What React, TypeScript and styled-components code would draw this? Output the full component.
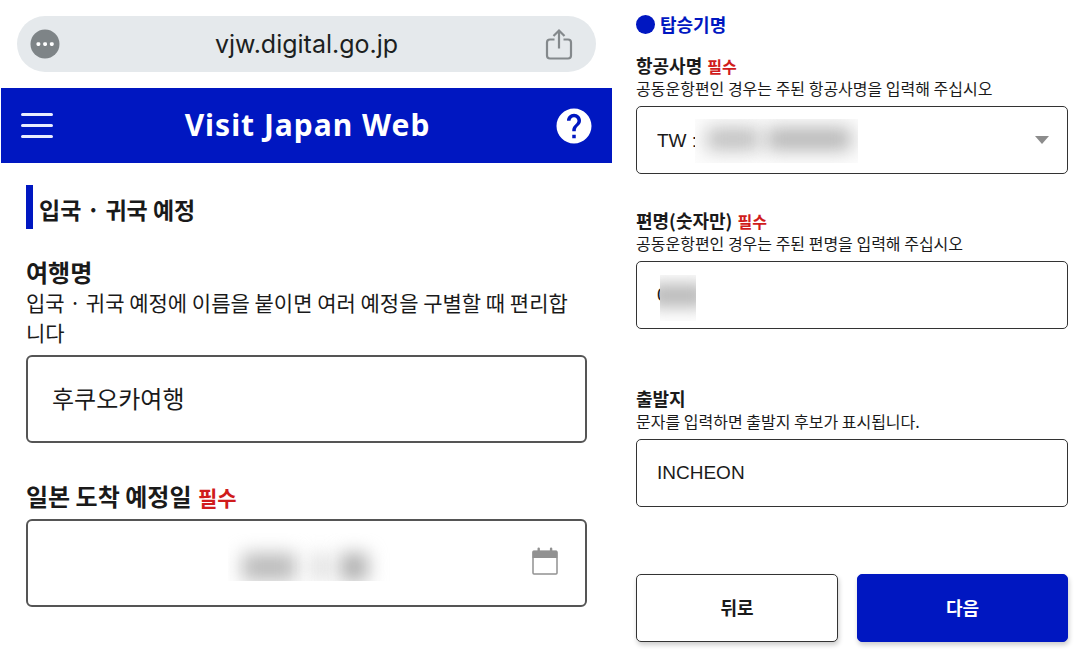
import React from 'react';
import styled, { createGlobalStyle } from 'styled-components';
import { MdHelp } from 'react-icons/md';

const BLUE = '#0017c1';
const RED = '#d01c1c';
const KR = "'Noto Sans CJK KR', sans-serif";

const GlobalStyle = createGlobalStyle`
  *, *::before, *::after { box-sizing: border-box; }
  body { margin: 0; background: #fff; color: #1a1a1a; font-family: ${KR}; }
  h1, h2, p { margin: 0; }
  button, input, select { font: inherit; color: inherit; }
`;

const Page = styled.div`
  display: grid;
  grid-template-columns: minmax(0, 612fr) minmax(0, 478fr);
  min-height: 100vh;
`;

const Pane = styled.div`
  min-width: 0;
`;

const AddressBar = styled.div`
  display: grid;
  grid-template-columns: 1fr auto 1fr;
  align-items: center;
  height: 56px;
  margin: 16px 16px 16px 17px;
  padding: 0 13px;
  border-radius: 28px;
  background: #e5e9ec;
`;

const Address = styled.span`
  font: 25px/32px Inter, sans-serif;
  color: #1c1f21;
`;

const IconButton = styled.button<{ $end?: boolean; $inset?: number }>`
  display: flex;
  justify-self: ${(p) => (p.$end ? 'end' : 'start')};
  padding: 0 ${(p) => p.$inset || 0}px 0 0;
  border: 0;
  background: none;
`;

const SiteHeader = styled.header`
  display: grid;
  grid-template-columns: 1fr auto 1fr;
  align-items: center;
  height: 75px;
  margin-left: 1px;
  padding: 0 17px 0 19px;
  background: ${BLUE};
  color: #fff;
`;

const SiteTitle = styled.h1`
  padding-bottom: 2px;
  font: 700 30px/40px 'Noto Sans', sans-serif;
  letter-spacing: 1px;
`;

const TripForm = styled.form`
  padding: 22px 25px 54px 26px;
`;

const SectionTitle = styled.h2`
  height: 44px;
  margin-bottom: 28px;
  padding-left: 6px;
  border-left: 7px solid ${BLUE};
  font-size: 23px;
  font-weight: 700;
  line-height: 48px;
`;

const FlightForm = styled.form`
  padding: 12px 22px 19px 24px;
`;

const GroupTitle = styled.h2`
  display: flex;
  align-items: center;
  gap: 5px;
  height: 24px;
  margin-bottom: 17px;
  color: ${BLUE};
  font-size: 18px;
  font-weight: 700;
  line-height: 24px;

  &::before {
    content: '';
    width: 19px;
    height: 19px;
    border-radius: 50%;
    background: currentColor;
  }
`;

type Size = { $large?: boolean };

const Field = styled.div<{ $space: number }>`
  margin-bottom: ${(p) => p.$space}px;
`;

const Label = styled.label<Size>`
  display: block;
  font-size: ${(p) => (p.$large ? 24 : 18)}px;
  font-weight: 700;
  line-height: ${(p) => (p.$large ? 30 : 24)}px;
`;

const Required = styled.span<Size>`
  margin-left: 1px;
  color: ${RED};
  font-size: ${(p) => (p.$large ? 21 : 16)}px;
  line-height: 1;
`;

const Hint = styled.p<Size>`
  font-size: ${(p) => (p.$large ? 21 : 16)}px;
  line-height: ${(p) => (p.$large ? 30 : 23)}px;
  word-break: break-all;
`;

const Control = styled.div<Size>`
  position: relative;
  display: flex;
  align-items: center;
  height: ${(p) => (p.$large ? 88 : 68)}px;
  margin-top: ${(p) => (p.$large ? 8 : 6)}px;
  padding-right: ${(p) => (p.$large ? 27 : 18)}px;
  padding-bottom: ${(p) => (p.$large ? 4 : 0)}px;
  border: ${(p) => (p.$large ? '2px solid #555' : '1px solid #333')};
  border-radius: ${(p) => (p.$large ? 6 : 5)}px;
`;

const inputStyles = `
  flex: 1;
  min-width: 0;
  height: 100%;
  border: 0;
  outline: 0;
  background: none;
`;

const LargeInput = styled.input`
  ${inputStyles}
  padding: 0 24px;
  font-size: 24px;
`;

const TextInput = styled.input`
  ${inputStyles}
  padding: 0 20px;
  font: 19px 'Liberation Sans', ${KR};
`;

const Select = styled.select`
  ${inputStyles}
  appearance: none;
  padding: 0 20px;
  font: 19px 'Liberation Sans', ${KR};
`;

const Arrow = styled.span`
  width: 0;
  border: solid transparent;
  border-width: 8px 7px 0;
  border-top-color: #8c8c8c;
  pointer-events: none;
`;

/* Hides private values behind a soft grey smear. */
const Mask = styled.span<{ $x: number; $y: number; $w: number; $h: number; $fill?: string }>`
  position: absolute;
  left: ${(p) => p.$x}px;
  top: ${(p) => p.$y}px;
  width: ${(p) => p.$w}px;
  height: ${(p) => p.$h}px;
  overflow: hidden;
  background: ${(p) => p.$fill || '#fff'};
  pointer-events: none;
`;

const Smear = styled.span<{ $x: number; $y: number; $w: number; $h: number; $tone: string }>`
  position: absolute;
  left: ${(p) => p.$x}px;
  top: ${(p) => p.$y}px;
  width: ${(p) => p.$w}px;
  height: ${(p) => p.$h}px;
  background: ${(p) => p.$tone};
  filter: blur(9px);
`;

const Actions = styled.div`
  display: grid;
  grid-template-columns: 202fr 211fr;
  gap: 19px;
`;

const Button = styled.button<{ $primary?: boolean }>`
  height: 68px;
  padding: 0 0 2px;
  border: 1px solid ${(p) => (p.$primary ? BLUE : '#333')};
  border-radius: 5px;
  background: ${(p) => (p.$primary ? BLUE : '#fff')};
  color: ${(p) => (p.$primary ? '#fff' : '#1a1a1a')};
  font-size: 18px;
  font-weight: 700;
  box-shadow: 1px 3px 5px rgba(0, 0, 0, 0.2);
`;

const MoreIcon = () => (
  <svg width="30" height="30" viewBox="0 0 30 30" aria-hidden="true">
    <circle cx="15" cy="15" r="14.5" fill="#7e8487" />
    <g fill="#fff">
      <rect x="6.5" y="13.2" width="3.8" height="3.8" rx="1.4" />
      <rect x="13.2" y="13.2" width="3.8" height="3.8" rx="1.4" />
      <rect x="19.9" y="13.2" width="3.8" height="3.8" rx="1.4" />
    </g>
  </svg>
);

const ShareIcon = () => (
  <svg width="28" height="32" viewBox="0 0 28 32" fill="none" stroke="#84898c" strokeWidth="2.2" aria-hidden="true">
    <path d="M9.500 11.500H5a3 3 0 0 0-3 3V27.500a3 3 0 0 0 3 3h18a3 3 0 0 0 3-3V14.500a3 3 0 0 0-3-3h-4.500" />
    <path d="M14 20.500V3M8.500 8l5.500-5.500L19.500 8" />
  </svg>
);

const MenuIcon = () => (
  <svg width="33" height="28" viewBox="0 0 33 28" stroke="#e9ecff" strokeWidth="3" strokeLinecap="round" aria-hidden="true">
    <path d="M2.500 2.500h29M2.500 13.500h29M2.500 24.500h29" />
  </svg>
);

const CalendarIcon = () => (
  <svg width="26" height="28" viewBox="0 0 26 28" aria-hidden="true">
    <rect x="1" y="4.500" width="24" height="22.500" rx="1" fill="none" stroke="#919191" strokeWidth="1.500" />
    <path d="M0.500 4.500q0-1 1-1h4V1.500q0-1 1.200-1t1.200 1V3.500h10V1.500q0-1 1.200-1t1.200 1V3.500h4q1 0 1 1V11H0.500z" fill="#919191" />
  </svg>
);

export default function App() {
  return (
    <>
      <GlobalStyle />
      <Page>
        <Pane>
          <AddressBar>
            <IconButton type="button" aria-label="More">
              <MoreIcon />
            </IconButton>
            <Address>vjw.digital.go.jp</Address>
            <IconButton type="button" aria-label="Share" $end $inset={10}>
              <ShareIcon />
            </IconButton>
          </AddressBar>
          <SiteHeader>
            <IconButton type="button" aria-label="Menu">
              <MenuIcon />
            </IconButton>
            <SiteTitle>Visit Japan Web</SiteTitle>
            <IconButton type="button" aria-label="Help" $end>
              <MdHelp size={42} />
            </IconButton>
          </SiteHeader>
          <TripForm>
            <SectionTitle>입국 · 귀국 예정</SectionTitle>
            <Field $space={38}>
              <Label $large htmlFor="trip">여행명</Label>
              <Hint $large>입국 · 귀국 예정에 이름을 붙이면 여러 예정을 구별할 때 편리합니다</Hint>
              <Control $large>
                <LargeInput id="trip" defaultValue="후쿠오카여행" />
              </Control>
            </Field>
            <Field $space={0}>
              <Label $large htmlFor="arrival">
                일본 도착 예정일 <Required $large>필수</Required>
              </Label>
              <Control $large>
                <LargeInput id="arrival" />
                <Mask $x={200} $y={12} $w={170} $h={48}>
                  <Smear $x={14} $y={20} $w={54} $h={28} $tone="#bcbcbc" />
                  <Smear $x={84} $y={20} $w={16} $h={28} $tone="#dcdcdc" />
                  <Smear $x={112} $y={20} $w={28} $h={28} $tone="#b0b0b0" />
                </Mask>
                <IconButton type="button" aria-label="Calendar">
                  <CalendarIcon />
                </IconButton>
              </Control>
            </Field>
          </TripForm>
        </Pane>
        <Pane>
          <FlightForm>
            <GroupTitle>탑승기명</GroupTitle>
            <Field $space={34}>
              <Label htmlFor="airline">
                항공사명 <Required>필수</Required>
              </Label>
              <Hint>공동운항편인 경우는 주된 항공사명을 입력해 주십시오</Hint>
              <Control>
                <Select id="airline" defaultValue="tw">
                  <option value="tw">TW :</option>
                </Select>
                <Mask $x={58} $y={12} $w={163} $h={44} $fill="#fcfcfc">
                  <Smear $x={12} $y={9} $w={52} $h={22} $tone="#bebebe" />
                  <Smear $x={72} $y={9} $w={84} $h={22} $tone="#b4b4b4" />
                </Mask>
                <Arrow />
              </Control>
            </Field>
            <Field $space={57}>
              <Label htmlFor="flight">
                편명(숫자만) <Required>필수</Required>
              </Label>
              <Hint>공동운항편인 경우는 주된 편명을 입력해 주십시오</Hint>
              <Control>
                <TextInput id="flight" defaultValue="0" />
                <Mask $x={23} $y={13} $w={36} $h={46}>
                  <Smear $x={-12} $y={9} $w={60} $h={23} $tone="#b4b4b4" />
                </Mask>
              </Control>
            </Field>
            <Field $space={67}>
              <Label htmlFor="origin">출발지</Label>
              <Hint>문자를 입력하면 출발지 후보가 표시됩니다.</Hint>
              <Control>
                <TextInput id="origin" defaultValue="INCHEON" />
              </Control>
            </Field>
            <Actions>
              <Button type="button">뒤로</Button>
              <Button type="submit" $primary>다음</Button>
            </Actions>
          </FlightForm>
        </Pane>
      </Page>
    </>
  );
}
